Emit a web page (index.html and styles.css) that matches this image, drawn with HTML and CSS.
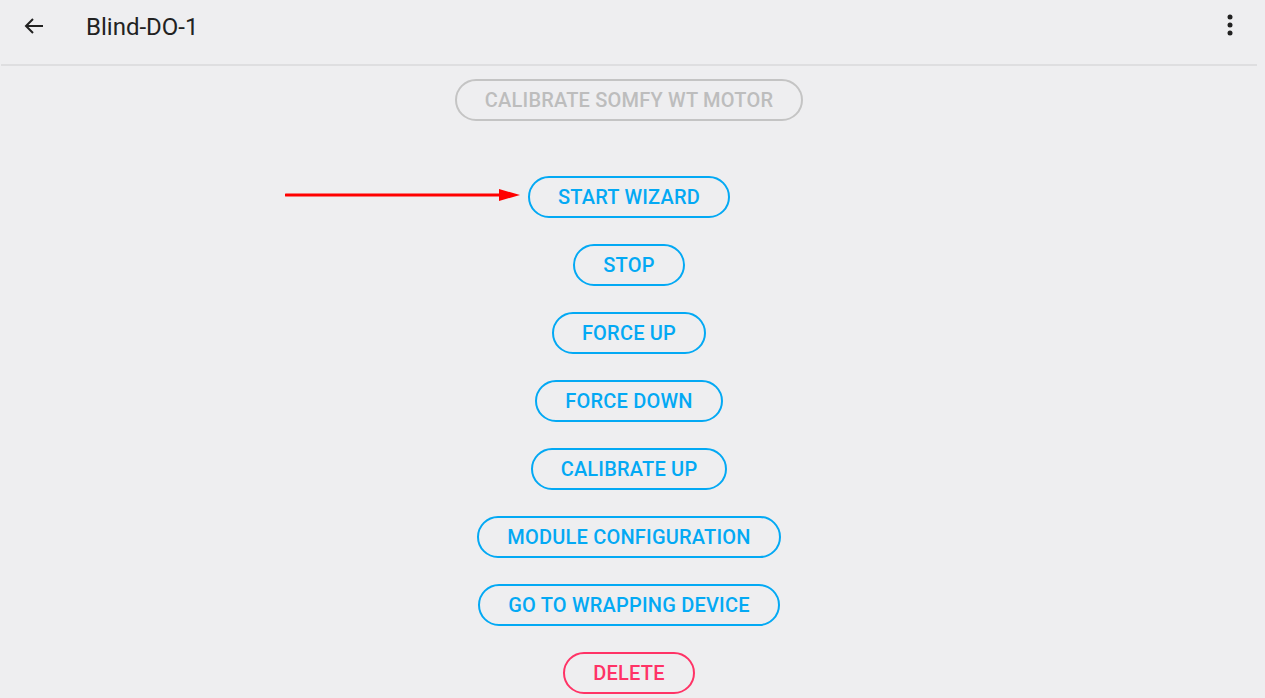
FILE: index.html
```html
<!DOCTYPE html>
<html lang="en">
<head>
<meta charset="utf-8">
<title>Blind-DO-1</title>
<link rel="stylesheet" href="styles.css">
</head>
<body>
<header class="topbar">
  <button class="icon-btn back" aria-label="Back">
    <svg width="20" height="16" viewBox="0 0 20 16"><path d="M19 8H2M9 1L2 8l7 7" fill="none" stroke="#212121" stroke-width="2"/></svg>
  </button>
  <h1 class="title">Blind-DO-1</h1>
  <button class="icon-btn menu" aria-label="More">
    <svg width="6" height="22" viewBox="0 0 6 22"><circle cx="3" cy="3" r="2.5" fill="#212121"/><circle cx="3" cy="11" r="2.5" fill="#212121"/><circle cx="3" cy="19" r="2.5" fill="#212121"/></svg>
  </button>
</header>
<main class="actions">
  <button class="pill disabled first">CALIBRATE SOMFY WT MOTOR</button>
  <div class="pointed">
    <svg class="arrow" width="236" height="14" viewBox="0 0 236 14"><line x1="1" y1="7" x2="216" y2="7" stroke="#ff0000" stroke-width="3" stroke-linecap="round"/><polygon points="214,1 235,7 214,13" fill="#ff0000"/></svg>
    <button class="pill">START WIZARD</button>
  </div>
  <button class="pill">STOP</button>
  <button class="pill">FORCE UP</button>
  <button class="pill">FORCE DOWN</button>
  <button class="pill">CALIBRATE UP</button>
  <button class="pill">MODULE CONFIGURATION</button>
  <button class="pill">GO TO WRAPPING DEVICE</button>
  <button class="pill danger">DELETE</button>
</main>
</body>
</html>
```
FILE: styles.css
```css
html, body {
  margin: 0;
  padding: 0;
  background: #eeeef0;
  font-family: Roboto, "Noto Sans", sans-serif;
  overflow: hidden;
  height: 698px;
}
.topbar {
  display: flex;
  align-items: center;
  height: 64px;
  margin: 0 8px 0 1px;
  border-bottom: 2px solid #dedee0;
  box-sizing: content-box;
}
.icon-btn {
  background: none;
  border: 0;
  padding: 0;
  display: flex;
  align-items: center;
  justify-content: center;
}
.back {
  margin-left: 22px;
  margin-top: -12px;
  width: 22px;
  height: 20px;
}
.title {
  margin: -11px 0 0 41px;
  font-size: 24px;
  font-weight: 400;
  color: #222;
  flex: 1;
}
.menu {
  margin-right: 24px;
  margin-top: -14px;
}
.actions {
  display: flex;
  flex-direction: column;
  align-items: center;
  gap: 26px;
  padding-top: 13px;
  margin-right: 7px;
}
.pill {
  font-family: Roboto, "Noto Sans", sans-serif;
  font-size: 20px;
  font-weight: 500;
  line-height: 24px;
  letter-spacing: 0.2px;
  color: #03a9f4;
  background: transparent;
  border: 2px solid #03a9f4;
  border-radius: 22px;
  padding: 7px 28px;
  height: 42px;
  box-sizing: border-box;
}
.pill.first {
  margin-bottom: 29px;
}
.pill.disabled {
  color: #bdbdbd;
  border-color: #c4c4c4;
}
.pill.danger {
  color: #ff3366;
  border-color: #ff3366;
}
.pointed {
  position: relative;
}
.arrow {
  position: absolute;
  right: calc(100% + 7px);
  top: 12px;
}
```
